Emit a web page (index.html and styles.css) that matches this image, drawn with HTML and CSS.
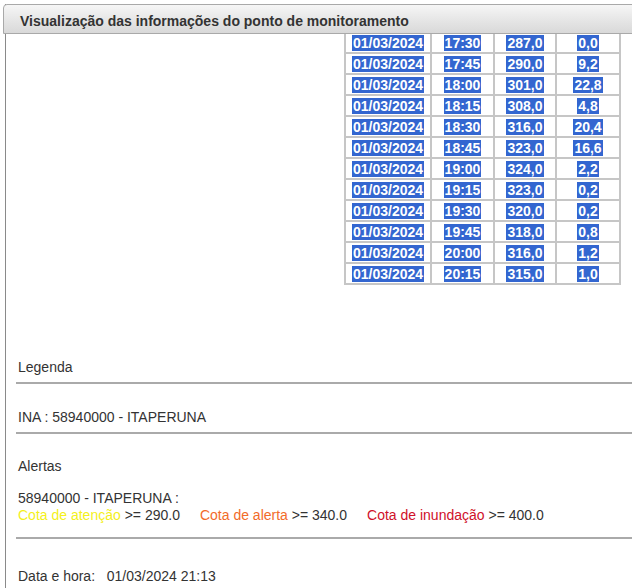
FILE: index.html
```html
<!DOCTYPE html>
<html lang="pt-BR">
<head>
<meta charset="utf-8">
<title>Visualização das informações do ponto de monitoramento</title>
<link rel="stylesheet" href="styles.css">
</head>
<body>
<div class="dialog">
  <div class="dialog-title">Visualização das informações do ponto de monitoramento</div>
  <div class="dialog-body">
    <div class="scroll-area">
      <table class="readings">
        <tr><td><span class="sel">01/03/2024</span></td><td><span class="sel">17:30</span></td><td><span class="sel">287,0</span></td><td><span class="sel">0,0</span></td></tr>
        <tr><td><span class="sel">01/03/2024</span></td><td><span class="sel">17:45</span></td><td><span class="sel">290,0</span></td><td><span class="sel">9,2</span></td></tr>
        <tr><td><span class="sel">01/03/2024</span></td><td><span class="sel">18:00</span></td><td><span class="sel">301,0</span></td><td><span class="sel">22,8</span></td></tr>
        <tr><td><span class="sel">01/03/2024</span></td><td><span class="sel">18:15</span></td><td><span class="sel">308,0</span></td><td><span class="sel">4,8</span></td></tr>
        <tr><td><span class="sel">01/03/2024</span></td><td><span class="sel">18:30</span></td><td><span class="sel">316,0</span></td><td><span class="sel">20,4</span></td></tr>
        <tr><td><span class="sel">01/03/2024</span></td><td><span class="sel">18:45</span></td><td><span class="sel">323,0</span></td><td><span class="sel">16,6</span></td></tr>
        <tr><td><span class="sel">01/03/2024</span></td><td><span class="sel">19:00</span></td><td><span class="sel">324,0</span></td><td><span class="sel">2,2</span></td></tr>
        <tr><td><span class="sel">01/03/2024</span></td><td><span class="sel">19:15</span></td><td><span class="sel">323,0</span></td><td><span class="sel">0,2</span></td></tr>
        <tr><td><span class="sel">01/03/2024</span></td><td><span class="sel">19:30</span></td><td><span class="sel">320,0</span></td><td><span class="sel">0,2</span></td></tr>
        <tr><td><span class="sel">01/03/2024</span></td><td><span class="sel">19:45</span></td><td><span class="sel">318,0</span></td><td><span class="sel">0,8</span></td></tr>
        <tr><td><span class="sel">01/03/2024</span></td><td><span class="sel">20:00</span></td><td><span class="sel">316,0</span></td><td><span class="sel">1,2</span></td></tr>
        <tr><td><span class="sel">01/03/2024</span></td><td><span class="sel">20:15</span></td><td><span class="sel">315,0</span></td><td><span class="sel">1,0</span></td></tr>
      </table>
    </div>

    <div class="info">
      <p class="legend-title">Legenda</p>
      <hr class="rule">
      <p class="station">INA : 58940000 - ITAPERUNA</p>
      <hr class="rule">
      <p class="alerts-title">Alertas</p>
      <div class="alerts">
        <div>58940000 - ITAPERUNA :</div>
        <div>
          <span class="lvl lvl-attention">Cota de atenção</span> &gt;= 290.0<span class="gap"></span><span class="lvl lvl-alert">Cota de alerta</span> &gt;= 340.0<span class="gap"></span><span class="lvl lvl-flood">Cota de inundação</span> &gt;= 400.0
        </div>
      </div>
      <hr class="rule">
      <p class="timestamp">Data e hora:&nbsp;&nbsp;&nbsp;01/03/2024 21:13</p>
    </div>
  </div>
</div>
</body>
</html>
```

FILE: styles.css
```css
html, body {
  margin: 0;
  padding: 0;
  background: #ffffff;
  overflow: hidden;
}

body {
  font-family: "Liberation Sans", Arial, sans-serif;
  font-size: 14px;
  line-height: 16px;
  color: #333333;
}

.dialog {
  width: 720px;
  margin: 4px 0 0 5px;
  border-left: 1px solid #8a8a8a;
  height: 600px;
}

.dialog-title {
  margin-left: -3px;
  height: 30px;
  box-sizing: border-box;
  padding: 8px 0 0 16px;
  border: 1px solid #a9a9a9;
  border-radius: 4px 0 0 0;
  background: linear-gradient(#f6f6f6, #e4e4e4 60%, #d9d9d9);
  font-weight: bold;
  color: #333333;
  position: relative;
  z-index: 1;
}

.dialog-body {
  padding-left: 12px;
}

.scroll-area {
  height: 260px;
  overflow: hidden;
}

.readings {
  margin: -3px 0 0 326px;
  border-collapse: collapse;
  border: 2px solid #c6c6c6;
}

.readings td {
  border: 2px solid #c6c6c6;
  height: 17px;
  padding: 1px 4px 1px 4px;
  text-align: center;
  font-weight: bold;
  color: #ffffff;
  white-space: nowrap;
}

.readings td:nth-child(1) { width: 76px; }
.readings td:nth-child(2) { width: 53px; }
.readings td:nth-child(3) { width: 52px; }
.readings td:nth-child(4) { width: 54px; }

.sel {
  background: #3366d0;
  padding: 0 1px;
}

.info {
  padding-top: 65px;
}

.info p {
  margin: 0;
}

.rule {
  height: 0;
  border: 0;
  border-top: 2px solid #aaaaaa;
  margin: 0 0 0 -2px;
}

.legend-title {
  padding-bottom: 7px;
}

.station {
  padding: 25px 0 7px;
}

.alerts-title {
  padding-top: 24px;
}

.alerts {
  padding: 16px 0 13px;
  line-height: 17px;
}

.gap {
  display: inline-block;
  width: 20px;
}

.lvl-attention { color: #f4f01a; }
.lvl-alert { color: #f26b2a; }
.lvl-flood { color: #d0102a; }

.timestamp {
  padding-top: 29px;
}
```
